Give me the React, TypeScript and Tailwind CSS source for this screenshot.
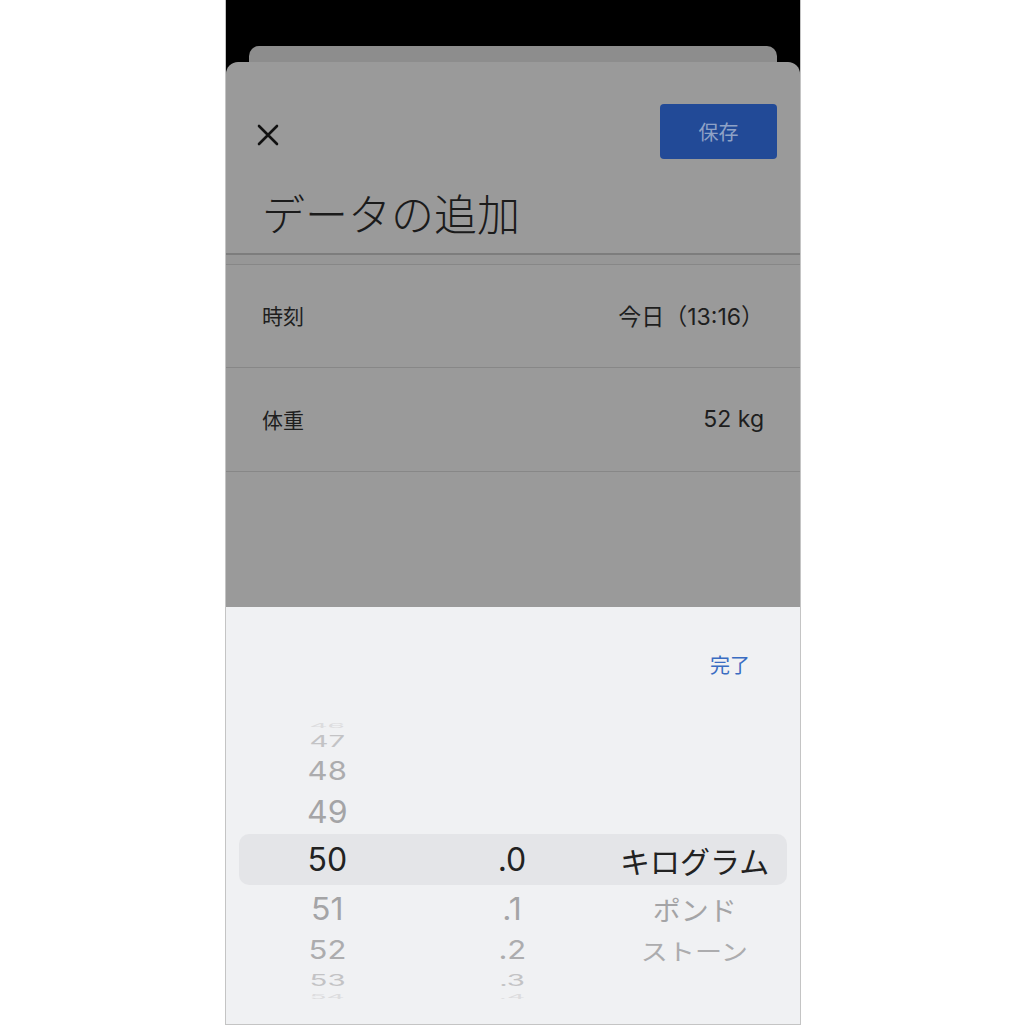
import React from "react";

type Row = {
  h: string;
  t: string;
  a: string;
  b?: string;
  c?: string;
  sel?: boolean;
};

const rows: Row[] = [
  { h: "h-[14px]", t: "-translate-y-[8px] scale-y-[0.2] scale-x-[0.88] text-[#dcdcde]", a: "46" },
  { h: "h-[20px]", t: "-translate-y-[6px] scale-y-[0.48] scale-x-[0.92] text-[#c3c3c5]", a: "47" },
  { h: "h-[37px]", t: "scale-y-[0.82] scale-x-[0.97] text-[#acacae]", a: "48" },
  { h: "h-[45px]", t: "scale-y-[0.96] text-[#a4a4a6]", a: "49" },
  { h: "h-[51px]", t: "text-[#222222]", a: "50", b: ".0", c: "キログラム", sel: true },
  { h: "h-[47px]", t: "scale-y-[0.96] text-[#a4a4a6]", a: "51", b: ".1", c: "ポンド" },
  { h: "h-[36px]", t: "scale-y-[0.82] scale-x-[0.97] text-[#acacae]", a: "52", b: ".2", c: "ストーン" },
  { h: "h-[22px]", t: "-translate-y-[3px] scale-y-[0.48] scale-x-[0.92] text-[#c3c3c5]", a: "53", b: ".3" },
  { h: "h-[7px]", t: "-translate-y-[9px] scale-y-[0.2] scale-x-[0.88] text-[#dcdcde]", a: "54", b: ".4" },
];

const num = "font-['Inter','Roboto',sans-serif]";
const jp = "font-['Noto_Sans_CJK_JP','Noto_Sans',sans-serif]";

export default function App() {
  return (
    <div className="w-[1026px] h-[1026px] bg-white flex justify-center">
      <div className="w-[576px] h-[1025px] border-x border-b border-[#c4c4c4] flex flex-col bg-black">
        {/* back card */}
        <div className="pt-[46px] px-[23px]">
          <div className="h-[16px] rounded-t-[10px] bg-[#8d8d8d]" />
        </div>
        {/* sheet */}
        <div className={`h-[545px] rounded-t-[12px] bg-[#9a9a9a] flex flex-col ${jp}`}>
          <div className="pt-[42px] pl-[30px] pr-[23px] flex items-start justify-between">
            <div className="mt-[19px] w-[24px] h-[24px] flex items-center justify-center">
              <svg width="22" height="22" viewBox="0 0 22 22" fill="none">
                <path d="M2 2 L20 20 M20 2 L2 20" stroke="#111111" strokeWidth="2.6" strokeLinecap="round" />
              </svg>
            </div>
            <div className="w-[117px] h-[55px] rounded-[4px] bg-[#224a97] flex items-center justify-center text-[20px] text-[#8fa2c6]">
              保存
            </div>
          </div>
          <div className="mt-[32px] pl-[36px] text-[43px] leading-[42px] font-light text-[#1b1b1b]">データの追加</div>
          <div className="mt-[20px] h-[2px] bg-[#7d7d7d]" />
          <div className="h-[9px] bg-[#979797]" />
          <div className="h-px bg-[#878787]" />
          <div className="h-[102px] px-[36px] flex items-center justify-between text-[21px] text-[#1e1e1e]">
            <span>時刻</span>
            <span className={num + " text-[23px]"}>
              <span className={jp}>今日（</span>13:16<span className={jp}>）</span>
            </span>
          </div>
          <div className="h-px bg-[#878787]" />
          <div className="h-[103px] px-[36px] flex items-center justify-between text-[21px] text-[#1e1e1e]">
            <span>体重</span>
            <span className={num + " text-[23px]"}>52 kg</span>
          </div>
          <div className="h-px bg-[#878787]" />
        </div>
        {/* picker */}
        <div className="flex-1 bg-[#f0f1f3] flex flex-col">
          <div className="h-[111px] pt-[47px] pr-[50px] flex justify-end">
            <span className={`${jp} text-[20px] leading-[22px] text-[#3a6cc2]`}>完了</span>
          </div>
          <div className="flex flex-col">
            {rows.map((r) => (
              <div
                key={r.a}
                className={`${r.h} mx-[13px] grid grid-cols-3 items-center ${r.sel ? "bg-[#e4e5e8] rounded-[10px]" : ""}`}
              >
                <div className="flex justify-center pr-[6px]">
                  <div className={`${num} ${r.t} text-[32px] leading-none`}>{r.a}</div>
                </div>
                <div className="flex justify-center pr-[2px]">
                  <div className={`${num} ${r.t} text-[32px] leading-none`}>{r.b ?? ""}</div>
                </div>
                <div className="flex justify-center pr-[2px]">
                  <div className={`${jp} ${r.t} ${r.sel ? "text-[30px]" : "text-[28px]"} leading-none`}>{r.c ?? ""}</div>
                </div>
              </div>
            ))}
          </div>
        </div>
      </div>
    </div>
  );
}
